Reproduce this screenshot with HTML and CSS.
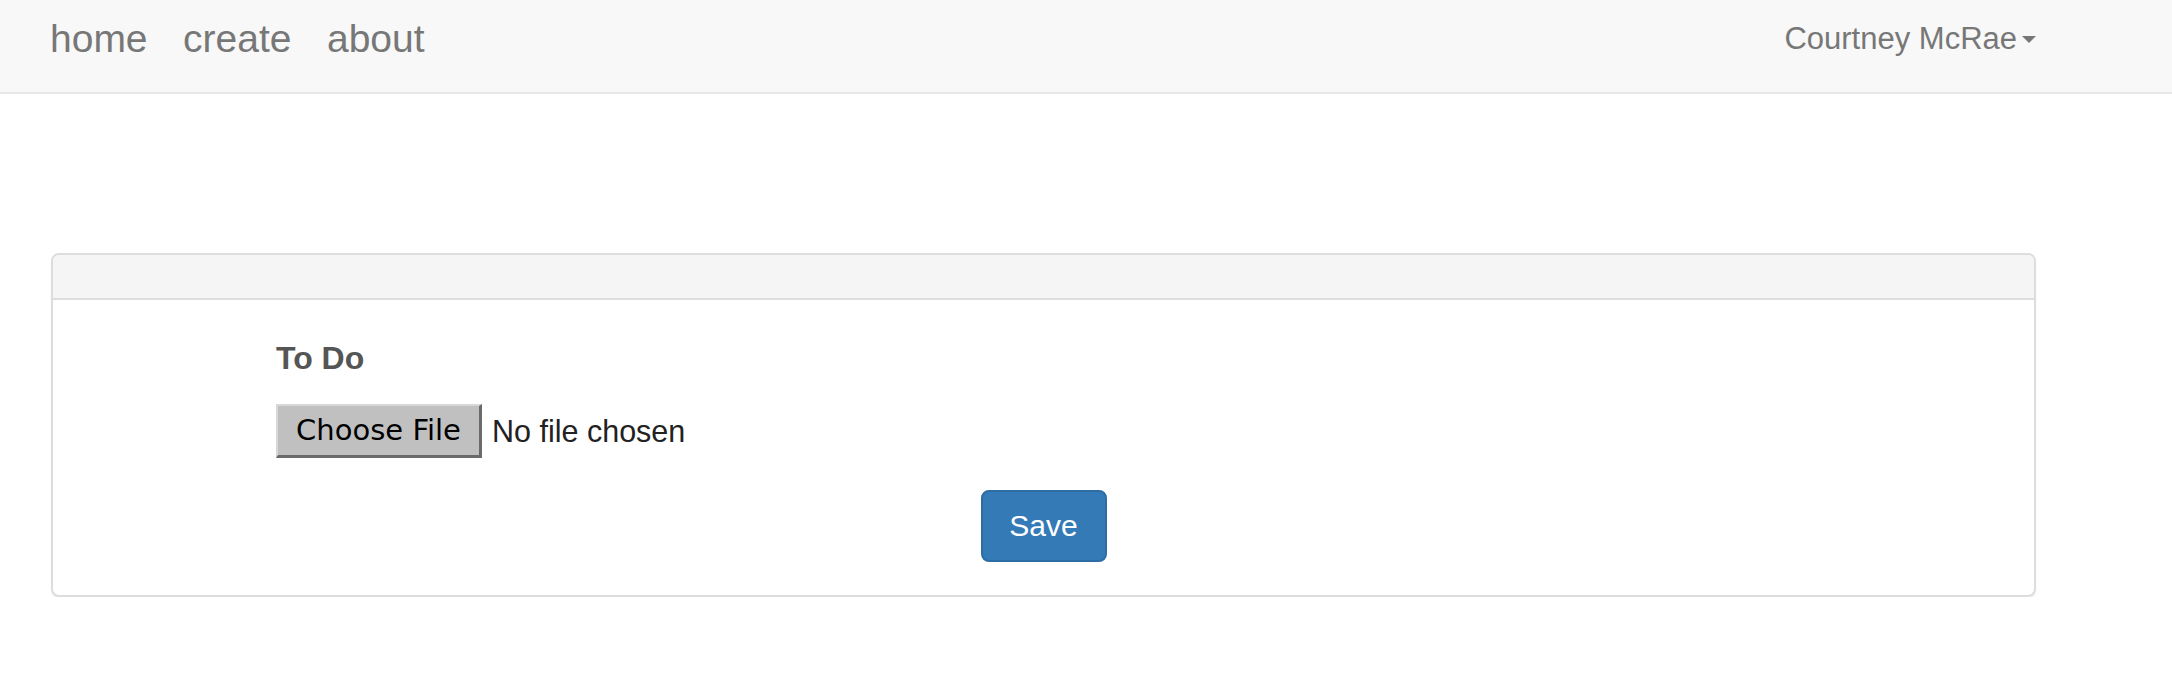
FILE: index.html
```html
<!DOCTYPE html>
<html lang="en">
<head>
<meta charset="utf-8">
<title>To Do</title>
<link rel="stylesheet" href="styles.css">
</head>
<body>
<nav class="navbar">
  <div class="nav-inner">
    <ul class="nav-links">
      <li><a href="#">home</a></li>
      <li><a href="#">create</a></li>
      <li><a href="#">about</a></li>
    </ul>
    <div class="user-menu">
      <span class="user-name">Courtney McRae</span><span class="caret"></span>
    </div>
  </div>
</nav>

<main class="container">
  <section class="panel">
    <div class="panel-heading"></div>
    <div class="panel-body">
      <form class="form">
        <label class="form-label">To Do</label>
        <div class="file-input">
          <span class="file-button">Choose File</span>
          <span class="file-status">No file chosen</span>
        </div>
        <div class="actions">
          <button type="button" class="btn-primary">Save</button>
        </div>
      </form>
    </div>
  </section>
</main>
</body>
</html>
```

FILE: styles.css
```css
html, body {
  margin: 0;
  padding: 0;
  background: #ffffff;
  font-family: "Liberation Sans", Arial, sans-serif;
}

.navbar {
  background: #f8f8f8;
  border-bottom: 2px solid #e7e7e7;
  height: 92px;
}

.nav-inner {
  margin-left: 50px;
  width: 1986px;
  display: flex;
  justify-content: space-between;
  align-items: flex-start;
}

.nav-links {
  list-style: none;
  margin: 0;
  padding: 19px 0 0 0;
  display: flex;
  gap: 35.5px;
}

.nav-links a {
  color: #777777;
  text-decoration: none;
  font-size: 39px;
  line-height: 39px;
  display: block;
}

.user-menu {
  padding-top: 23px;
  display: flex;
  align-items: center;
  color: #777777;
  font-size: 31px;
  line-height: 31px;
}

.caret {
  width: 0;
  height: 0;
  margin-left: 5px;
  margin-top: 2px;
  border-left: 7px solid transparent;
  border-right: 7px solid transparent;
  border-top: 7px solid #777777;
}

.container {
  margin-left: 51px;
  width: 1985px;
  padding-top: 159px;
}

.panel {
  border: 2px solid #dddddd;
  border-radius: 8px;
  background: #ffffff;
  box-shadow: 0 2px 2px rgba(0, 0, 0, 0.05);
  overflow: hidden;
}

.panel-heading {
  height: 43px;
  background: #f5f5f5;
  border-bottom: 2px solid #dddddd;
}

.panel-body {
  padding: 42px 0 33px 0;
}

.form {
  display: flex;
  flex-direction: column;
}

.form-label {
  margin-left: 223px;
  font-size: 32px;
  line-height: 32px;
  font-weight: bold;
  color: #555555;
}

.file-input {
  margin: 30px 0 0 223px;
  display: flex;
  align-items: center;
}

.file-button {
  box-sizing: border-box;
  width: 206px;
  height: 54px;
  background: #c0c0c0;
  border-top: 2px solid #d8d8d8;
  border-left: 2px solid #d8d8d8;
  border-right: 3px solid #6a6a6a;
  border-bottom: 3px solid #6a6a6a;
  font-family: "DejaVu Sans", sans-serif;
  font-size: 29px;
  line-height: 49px;
  color: #000000;
  text-align: center;
}

.file-status {
  margin-left: 10px;
  font-size: 30.5px;
  color: #222222;
}

.actions {
  margin-top: 32px;
  display: flex;
  justify-content: center;
}

.btn-primary {
  box-sizing: border-box;
  height: 72px;
  width: 126px;
  background: #337ab7;
  border: 2px solid #2e6da4;
  border-radius: 8px;
  color: #ffffff;
  font-family: "Liberation Sans", Arial, sans-serif;
  font-size: 30px;
  line-height: 68px;
  padding: 0;
}
```
